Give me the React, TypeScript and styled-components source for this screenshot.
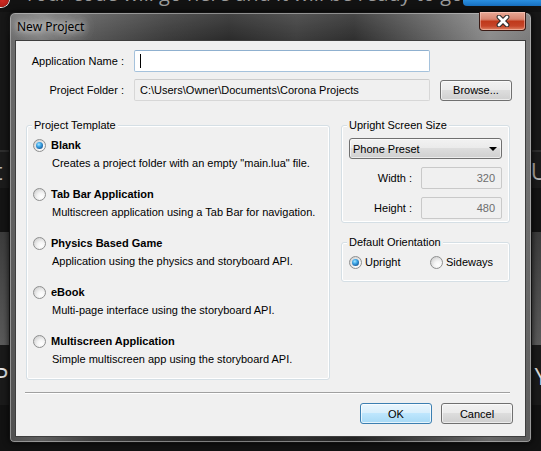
import React from 'react';
import styled, { createGlobalStyle } from 'styled-components';

const GlobalStyle = createGlobalStyle`
  html, body {
    margin: 0;
    padding: 0;
    background: #151515;
  }
  body {
    font-family: 'Liberation Sans', Arial, sans-serif;
    font-size: 11px;
    color: #000;
  }
`;

const Desktop = styled.div`
  position: relative;
  width: 541px;
  height: 451px;
  overflow: hidden;
  background: #161616;
`;

/* ---------- the app window behind the dialog ---------- */

const BackApp = styled.div`
  display: flex;
  flex-direction: column;
  height: 100%;
`;

const BackHeader = styled.div`
  position: relative;
  height: 12px;
  display: flex;
  align-items: flex-end;
  overflow: hidden;
  background: #121212;
`;

const AlertDot = styled.div`
  position: absolute;
  left: -7px;
  top: -9px;
  width: 16px;
  height: 16px;
  border-radius: 50%;
  background: radial-gradient(circle at 60% 60%, #d02a22, #8c120e);
  box-shadow: 0 0 0 1px #f0f0f0;
`;

const HeaderText = styled.div`
  margin-left: 24px;
  margin-bottom: 8px;
  font-family: 'Open Sans', 'Liberation Sans', sans-serif;
  font-size: 20px;
  line-height: 20px;
  color: #9a9a9a;
  white-space: nowrap;
`;

const BlueTab = styled.div`
  position: absolute;
  right: 0;
  top: 0;
  width: 78px;
  height: 6px;
  border-radius: 0 0 0 4px;
  background: linear-gradient(180deg, #2a8fe0, #1870c0);
`;

const BackBand = styled.div<{ $h: number; $bg: string }>`
  height: ${(p) => p.$h}px;
  background: ${(p) => p.$bg};
  display: flex;
  align-items: center;
  justify-content: space-between;
  font-family: 'Open Sans', 'Liberation Sans', sans-serif;
  font-size: 24px;
  color: #b8b8b8;
  overflow: hidden;
`;

const BackGlyph = styled.span<{ $side: 'left' | 'right'; $color?: string }>`
  ${(p) => (p.$side === 'left' ? 'margin-left: -6px;' : 'margin-right: -7px;')}
  color: ${(p) => p.$color || '#b8b8b8'};
`;

/* ---------- dialog frame ---------- */

const Window = styled.div`
  position: absolute;
  left: 9px;
  top: 12px;
  width: 523px;
  height: 431px;
  box-sizing: border-box;
  display: flex;
  flex-direction: column;
  padding: 0 5px 5px;
  border: 1px solid #111;
  border-radius: 6px 6px 5px 5px;
  background:
    linear-gradient(180deg, rgba(255, 255, 255, 0.12) 0px, rgba(0, 0, 0, 0) 28px, rgba(0, 0, 0, 0.25) 100%),
    linear-gradient(90deg, #6a6a6a 0%, #7c7c7c 6%, #555 16%, #3a3a3a 30%, #2a2a2a 42%, #3c3c3c 55%, #2e2e2e 66%, #5e5e5e 80%, #8a8a8a 92%, #7a7a7a 100%);
  box-shadow: inset 0 0 0 1px rgba(200, 200, 200, 0.55), 0 0 6px rgba(0, 0, 0, 0.8);
`;

const TitleBar = styled.div`
  height: 27px;
  display: flex;
  align-items: flex-start;
`;

const Title = styled.div`
  margin-top: 6px;
  padding-left: 2px;
  font-family: 'Noto Sans', 'Open Sans', sans-serif;
  font-size: 12px;
  line-height: 16px;
  color: #000;
  text-shadow: 0 0 6px rgba(255, 255, 255, 0.9), 0 0 12px rgba(255, 255, 255, 0.7), 0 0 18px rgba(255, 255, 255, 0.5);
`;

const CloseButton = styled.div`
  margin-left: auto;
  margin-top: -1px;
  width: 47px;
  height: 19px;
  box-sizing: border-box;
  display: flex;
  align-items: center;
  justify-content: center;
  border: 1px solid #3a1a14;
  border-top: none;
  border-radius: 0 0 4px 4px;
  background: linear-gradient(180deg, #e9a996 0%, #d88570 40%, #c0391b 52%, #c54428 78%, #e08465 100%);
  box-shadow: inset 0 0 0 1px rgba(255, 220, 210, 0.45);
`;

const Client = styled.div`
  flex: 1;
  display: flex;
  flex-direction: column;
  background: #f0f0f0;
  border: 1px solid #3e3e3e;
`;

/* ---------- top form ---------- */

const FormGrid = styled.div`
  display: grid;
  grid-template-columns: 108px 296px 72px;
  grid-auto-rows: 22px;
  column-gap: 10px;
  row-gap: 7px;
  margin-top: 9px;
  align-items: center;
`;

const FieldLabel = styled.div`
  text-align: right;
  white-space: nowrap;
`;

const TextBox = styled.div<{ $readOnly?: boolean }>`
  height: 22px;
  box-sizing: border-box;
  display: flex;
  align-items: center;
  padding: 0 5px;
  border: 1px solid ${(p) => (p.$readOnly ? '#d7d7d7' : '#a5c2dc')};
  border-top-color: ${(p) => (p.$readOnly ? '#cccccc' : '#8fb0cf')};
  border-radius: 2px;
  background: ${(p) => (p.$readOnly ? '#f0f0f0' : '#ffffff')};
  white-space: nowrap;
  overflow: hidden;
`;

const Caret = styled.span`
  display: block;
  width: 1px;
  height: 14px;
  background: #000;
`;

const Button = styled.div<{ $default?: boolean }>`
  height: 21px;
  box-sizing: border-box;
  display: flex;
  align-items: center;
  justify-content: center;
  border: 1px solid ${(p) => (p.$default ? '#3c7fb1' : '#707070')};
  border-radius: 3px;
  background: ${(p) =>
    p.$default
      ? 'linear-gradient(180deg, #eaf6fd 0%, #d9effc 45%, #bee6fd 50%, #a7d9f5 100%)'
      : 'linear-gradient(180deg, #f2f2f2 0%, #ebebeb 45%, #dddddd 50%, #cfcfcf 100%)'};
  box-shadow: inset 0 0 0 1px ${(p) => (p.$default ? 'rgba(255,255,255,0.7)' : 'rgba(255,255,255,0.6)')};
  white-space: nowrap;
`;

/* ---------- group boxes ---------- */

const Main = styled.div`
  display: flex;
  gap: 11px;
  margin-top: 24px;
  padding-left: 10px;
`;

const Column = styled.div`
  display: flex;
  flex-direction: column;
  gap: 19px;
`;

const Group = styled.div<{ $w: number; $h: number }>`
  position: relative;
  width: ${(p) => p.$w}px;
  height: ${(p) => p.$h}px;
  box-sizing: border-box;
  border: 1px solid #d5dfe5;
  border-radius: 3px;
  box-shadow: inset 0 0 0 1px #ffffff;
`;

const Caption = styled.span`
  position: absolute;
  left: 5px;
  top: -7px;
  padding: 0 2px;
  line-height: 13px;
  background: #f0f0f0;
  white-space: nowrap;
`;

const TemplateList = styled.div`
  display: flex;
  flex-direction: column;
  gap: 15px;
  padding: 11px 0 0 6px;
`;

const TemplateItem = styled.div`
  display: flex;
  flex-direction: column;
  gap: 2px;
`;

const RadioRow = styled.div<{ $gap: number }>`
  display: flex;
  align-items: center;
  gap: ${(p) => p.$gap}px;
  height: 16px;
  white-space: nowrap;
`;

const RadioCircle = styled.span<{ $checked?: boolean }>`
  position: relative;
  flex: none;
  width: 13px;
  height: 13px;
  box-sizing: border-box;
  border-radius: 50%;
  border: 1px solid #8e8f8f;
  background: radial-gradient(circle at 65% 70%, #ffffff 0%, #f4f4f4 35%, #d6d6d6 75%, #c4c4c4 100%);
  &::after {
    content: '';
    display: ${(p) => (p.$checked ? 'block' : 'none')};
    position: absolute;
    left: 2px;
    top: 2px;
    width: 7px;
    height: 7px;
    border-radius: 50%;
    background: radial-gradient(circle at 40% 35%, #a6e6ff 0%, #40a8e8 35%, #1a5f9e 75%, #103f6e 100%);
  }
`;

const ItemTitle = styled.span`
  font-weight: bold;
`;

const ItemDesc = styled.div`
  height: 16px;
  line-height: 16px;
  padding-left: 19px;
  white-space: nowrap;
`;

const SizeBody = styled.div`
  display: flex;
  flex-direction: column;
  gap: 8px;
  padding: 12px 7px 0;
`;

const Select = styled.div`
  height: 21px;
  box-sizing: border-box;
  display: flex;
  align-items: center;
  justify-content: space-between;
  padding: 0 4px 0 3px;
  border: 1px solid #707070;
  border-radius: 3px;
  background: linear-gradient(180deg, #f2f2f2 0%, #ebebeb 45%, #dddddd 50%, #cfcfcf 100%);
  box-shadow: inset 0 0 0 1px rgba(255, 255, 255, 0.6);
`;

const Arrow = styled.span`
  width: 0;
  height: 0;
  border-left: 4px solid transparent;
  border-right: 4px solid transparent;
  border-top: 4px solid #000;
  margin-top: 1px;
`;

const SizeRow = styled.div`
  display: grid;
  grid-template-columns: 1fr 81px;
  column-gap: 9px;
  align-items: center;
`;

const NumberBox = styled.div`
  height: 22px;
  box-sizing: border-box;
  display: flex;
  align-items: center;
  justify-content: flex-end;
  padding: 0 6px;
  border: 1px solid #c9c9c9;
  border-radius: 2px;
  background: #f0f0f0;
  color: #6d6d6d;
`;

const OrientationBody = styled.div`
  display: grid;
  grid-template-columns: 81px auto;
  align-items: center;
  height: 100%;
  padding-left: 7px;
`;

/* ---------- footer ---------- */

const Separator = styled.div`
  margin: 12px 0 0 9px;
  width: 485px;
  height: 1px;
  background: #a0a0a0;
  border-bottom: 1px solid #ffffff;
`;

const ButtonRow = styled.div`
  display: grid;
  grid-template-columns: 72px 72px;
  column-gap: 9px;
  justify-content: end;
  margin-top: 9px;
  padding-right: 12px;
`;

const templates = [
  { title: 'Blank', desc: 'Creates a project folder with an empty "main.lua" file.', checked: true },
  { title: 'Tab Bar Application', desc: 'Multiscreen application using a Tab Bar for navigation.' },
  { title: 'Physics Based Game', desc: 'Application using the physics and storyboard API.' },
  { title: 'eBook', desc: 'Multi-page interface using the storyboard API.' },
  { title: 'Multiscreen Application', desc: 'Simple multiscreen app using the storyboard API.' },
];

const CloseGlyph = () => (
  <svg width="14" height="12" viewBox="0 0 14 12">
    <path d="M3 2 L11 10 M11 2 L3 10" stroke="#2b2b2b" strokeWidth="4.8" strokeLinecap="round" fill="none" />
    <path d="M3 2 L11 10 M11 2 L3 10" stroke="#ffffff" strokeWidth="2.8" strokeLinecap="round" fill="none" />
  </svg>
);

export default function App() {
  return (
    <>
      <GlobalStyle />
      <Desktop>
        <BackApp>
          <BackHeader>
            <AlertDot />
            <HeaderText>Your code will go here and it will be ready to go when it starts</HeaderText>
            <BlueTab />
          </BackHeader>
          <BackBand $h={138} $bg="#171717" />
          <BackBand $h={2} $bg="#2e2e2e" />
          <BackBand $h={36} $bg="#1b1b1b">
            <BackGlyph $side="left">t</BackGlyph>
            <BackGlyph $side="right">U</BackGlyph>
          </BackBand>
          <BackBand $h={44} $bg="#141414" />
          <BackBand $h={113} $bg="linear-gradient(180deg, #3c3c3c, #5a5a5a)" />
          <BackBand $h={60} $bg="#1a1a1a">
            <BackGlyph $side="left" $color="#e8e8e8">P</BackGlyph>
            <BackGlyph $side="right" $color="#d8d8d8">Y</BackGlyph>
          </BackBand>
          <BackBand $h={46} $bg="#121212" />
        </BackApp>

        <Window>
          <TitleBar>
            <Title>New Project</Title>
            <CloseButton>
              <CloseGlyph />
            </CloseButton>
          </TitleBar>
          <Client>
            <FormGrid>
              <FieldLabel>Application Name :</FieldLabel>
              <TextBox>
                <Caret />
              </TextBox>
              <span />
              <FieldLabel>Project Folder :</FieldLabel>
              <TextBox $readOnly>C:\Users\Owner\Documents\Corona Projects</TextBox>
              <Button>Browse...</Button>
            </FormGrid>

            <Main>
              <Group $w={304} $h={255}>
                <Caption>Project Template</Caption>
                <TemplateList>
                  {templates.map((t) => (
                    <TemplateItem key={t.title}>
                      <RadioRow $gap={5}>
                        <RadioCircle $checked={t.checked} />
                        <ItemTitle>{t.title}</ItemTitle>
                      </RadioRow>
                      <ItemDesc>{t.desc}</ItemDesc>
                    </TemplateItem>
                  ))}
                </TemplateList>
              </Group>

              <Column>
                <Group $w={169} $h={98}>
                  <Caption>Upright Screen Size</Caption>
                  <SizeBody>
                    <Select>
                      <span>Phone Preset</span>
                      <Arrow />
                    </Select>
                    <SizeRow>
                      <FieldLabel>Width :</FieldLabel>
                      <NumberBox>320</NumberBox>
                    </SizeRow>
                    <SizeRow>
                      <FieldLabel>Height :</FieldLabel>
                      <NumberBox>480</NumberBox>
                    </SizeRow>
                  </SizeBody>
                </Group>

                <Group $w={169} $h={40}>
                  <Caption>Default Orientation</Caption>
                  <OrientationBody>
                    <RadioRow $gap={3}>
                      <RadioCircle $checked />
                      <span>Upright</span>
                    </RadioRow>
                    <RadioRow $gap={3}>
                      <RadioCircle />
                      <span>Sideways</span>
                    </RadioRow>
                  </OrientationBody>
                </Group>
              </Column>
            </Main>

            <Separator />
            <ButtonRow>
              <Button $default>OK</Button>
              <Button>Cancel</Button>
            </ButtonRow>
          </Client>
        </Window>
      </Desktop>
    </>
  );
}
